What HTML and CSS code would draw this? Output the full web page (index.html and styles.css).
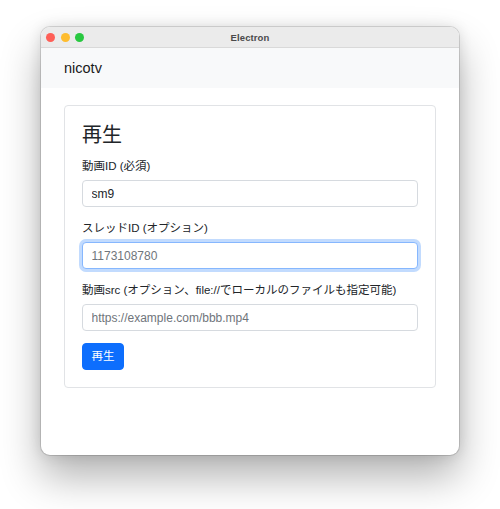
FILE: index.html
```html
<!DOCTYPE html>
<html lang="ja">
<head>
<meta charset="utf-8">
<title>nicotv</title>
<link rel="stylesheet" href="styles.css">
</head>
<body>
<div class="window">
  <div class="titlebar">
    <div class="lights">
      <span class="light red"></span>
      <span class="light yellow"></span>
      <span class="light green"></span>
    </div>
    <div class="title">Electron</div>
    <div></div>
  </div>
  <div class="content">
    <nav class="navbar">
      <div class="container">
        <span class="brand">nicotv</span>
      </div>
    </nav>
    <div class="container main">
      <div class="card">
        <h3 class="card-title">再生</h3>
        <form class="form">
          <div class="field">
            <label class="label">動画ID (必須)</label>
            <input class="input" type="text" value="sm9">
          </div>
          <div class="field">
            <label class="label">スレッドID (オプション)</label>
            <input class="input focus" type="text" placeholder="1173108780">
          </div>
          <div class="field">
            <label class="label">動画src (オプション、file://でローカルのファイルも指定可能)</label>
            <input class="input" type="text" placeholder="https://example.com/bbb.mp4">
          </div>
          <button class="btn" type="button">再生</button>
        </form>
      </div>
    </div>
  </div>
</div>
</body>
</html>
```

FILE: styles.css
```css
html, body {
  margin: 0;
  padding: 0;
  background: #ffffff;
}
body {
  width: 500px;
  height: 509px;
  overflow: hidden;
  padding-top: 27px;
  box-sizing: border-box;
  font-family: "Liberation Sans", "Noto Sans CJK JP", sans-serif;
  color: #212529;
}
.window {
  margin-left: 41px;
  width: 418px;
  height: 428px;
  border-radius: 9px;
  overflow: hidden;
  background: #ffffff;
  box-shadow: 0 0 0 1px rgba(0,0,0,0.13), 0 22px 40px rgba(0,0,0,0.3), 0 0 14px rgba(0,0,0,0.12);
  display: flex;
  flex-direction: column;
}
.titlebar {
  height: 20px;
  flex: none;
  background: #ebebeb;
  border-bottom: 1px solid #d9d9d9;
  display: grid;
  grid-template-columns: 1fr auto 1fr;
  align-items: center;
}
.lights {
  display: flex;
  gap: 5.5px;
  padding-left: 5px;
  align-items: center;
}
.light {
  width: 9px;
  height: 9px;
  border-radius: 50%;
  display: block;
}
.red { background: #fe5f57; }
.yellow { background: #febc2e; }
.green { background: #28c840; }
.title {
  font-size: 9.5px;
  font-weight: bold;
  color: #4a4a4a;
  letter-spacing: 0.1px;
}
.content {
  flex: 1;
}
.container {
  padding: 0 23px;
}
.navbar {
  background: #f8f9fa;
  height: 40px;
  display: flex;
  align-items: center;
}
.brand {
  font-size: 14.5px;
  color: #1a1a1a;
  line-height: 20px;
}
.main {
  padding-top: 17px;
}
.card {
  border: 1px solid #e1e3e6;
  border-radius: 4px;
  padding: 17px;
}
.card-title {
  margin: 0 0 10px;
  font-size: 20px;
  line-height: 24px;
  font-weight: 400;
  color: #212529;
}
.form {
  display: flex;
  flex-direction: column;
  align-items: flex-start;
}
.field {
  width: 100%;
  margin-bottom: 12px;
}
.label {
  display: block;
  font-size: 11.5px;
  line-height: 18px;
  margin-bottom: 5px;
  color: #212529;
}
.input {
  display: block;
  width: 100%;
  height: 27px;
  box-sizing: border-box;
  border: 1px solid #d6dadf;
  border-radius: 4px;
  padding: 0 8.5px;
  font-family: "Liberation Sans", "Noto Sans CJK JP", sans-serif;
  font-size: 12px;
  color: #212529;
  background: #ffffff;
  outline: none;
}
.input::placeholder {
  color: #6f757b;
}
.input.focus {
  border-color: #86b7fe;
  box-shadow: 0 0 0 3px rgba(13,110,253,0.25);
}
.btn {
  height: 27px;
  padding: 0 8.5px;
  border: 1px solid #0d6efd;
  border-radius: 4px;
  background: #0d6efd;
  color: #ffffff;
  font-family: "Liberation Sans", "Noto Sans CJK JP", sans-serif;
  font-size: 11.5px;
  line-height: 17px;
}
```
